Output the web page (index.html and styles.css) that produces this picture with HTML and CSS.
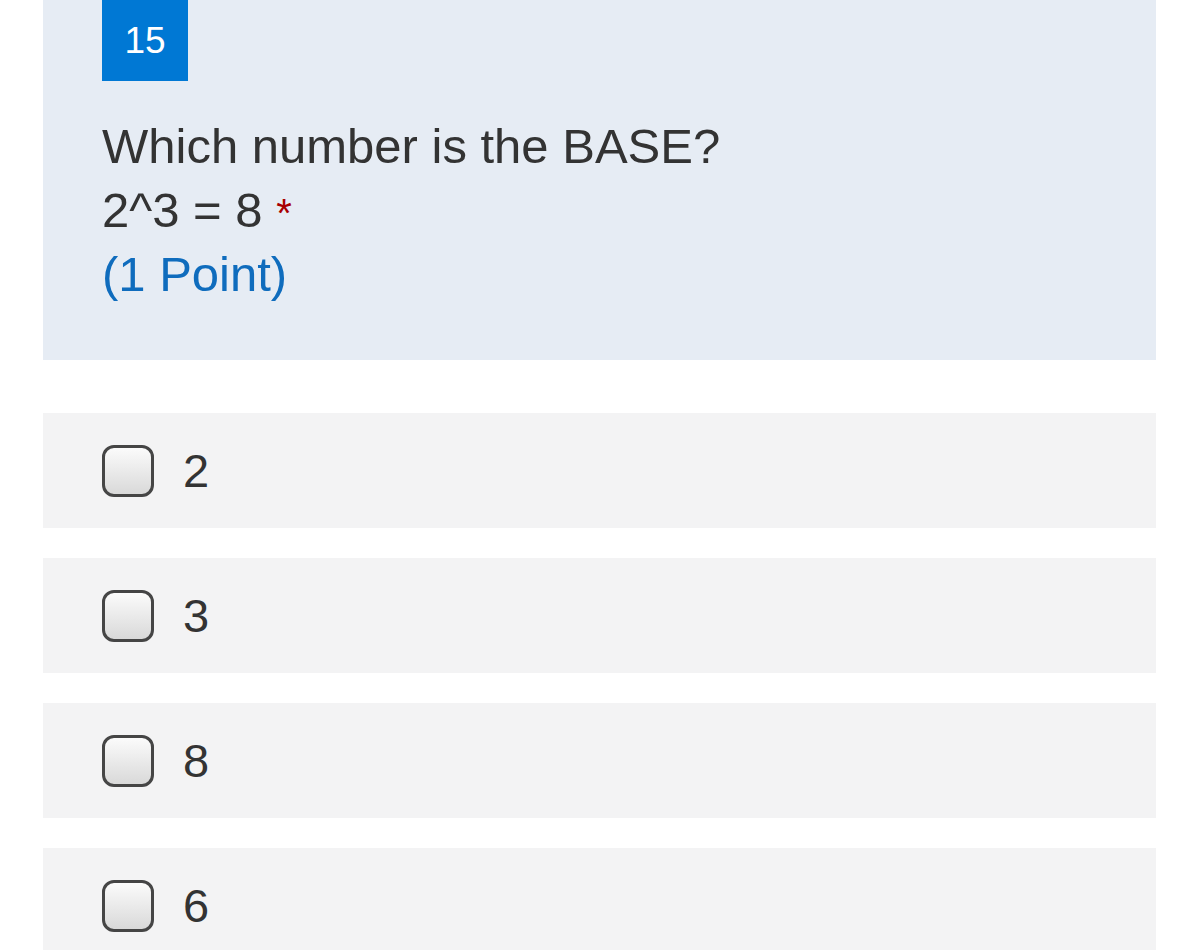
FILE: index.html
```html
<!DOCTYPE html>
<html>
<head>
<meta charset="utf-8">
<link rel="stylesheet" href="styles.css">
</head>
<body>
<div class="page">
  <div class="question">
    <div class="badge">15</div>
    <div class="qtext">
      <div class="line">Which number is the BASE?</div>
      <div class="line">2^3 = 8 <span class="req">*</span></div>
      <div class="line points">(1 Point)</div>
    </div>
  </div>
  <div class="options">
    <label class="option"><span class="box"></span><span class="label">2</span></label>
    <label class="option"><span class="box"></span><span class="label">3</span></label>
    <label class="option"><span class="box"></span><span class="label">8</span></label>
    <label class="option"><span class="box"></span><span class="label">6</span></label>
  </div>
</div>
</body>
</html>
```
FILE: styles.css
```css
html, body {
  margin: 0;
  padding: 0;
  background: #ffffff;
}
body {
  font-family: "Liberation Sans", Arial, Helvetica, sans-serif;
  color: #333333;
  height: 950px;
  overflow: hidden;
}
.page {
  margin: 0 44px 0 43px;
}
.question {
  background: #e6ecf4;
  padding: 0 0 54px 59px;
}
.badge {
  width: 86px;
  height: 81px;
  background: #0078d4;
  color: #ffffff;
  font-size: 37px;
  display: flex;
  align-items: center;
  justify-content: center;
}
.qtext {
  margin-top: 33px;
  font-size: 49px;
  line-height: 64px;
}
.line {
  height: 64px;
}
.req {
  color: #a80000;
  font-size: 40px;
  line-height: 0;
}
.points {
  color: #0f6cbd;
}
.options {
  margin-top: 53px;
  display: flex;
  flex-direction: column;
  gap: 30px;
}
.option {
  height: 115px;
  background: #f3f3f4;
  display: flex;
  align-items: center;
  padding-left: 59px;
}
.box {
  width: 46px;
  height: 46px;
  border: 3px solid #454545;
  border-radius: 12px;
  background: linear-gradient(#fbfbfb, #d9d9d9);
  flex: none;
}
.label {
  margin-left: 29px;
  font-size: 47px;
}
```
